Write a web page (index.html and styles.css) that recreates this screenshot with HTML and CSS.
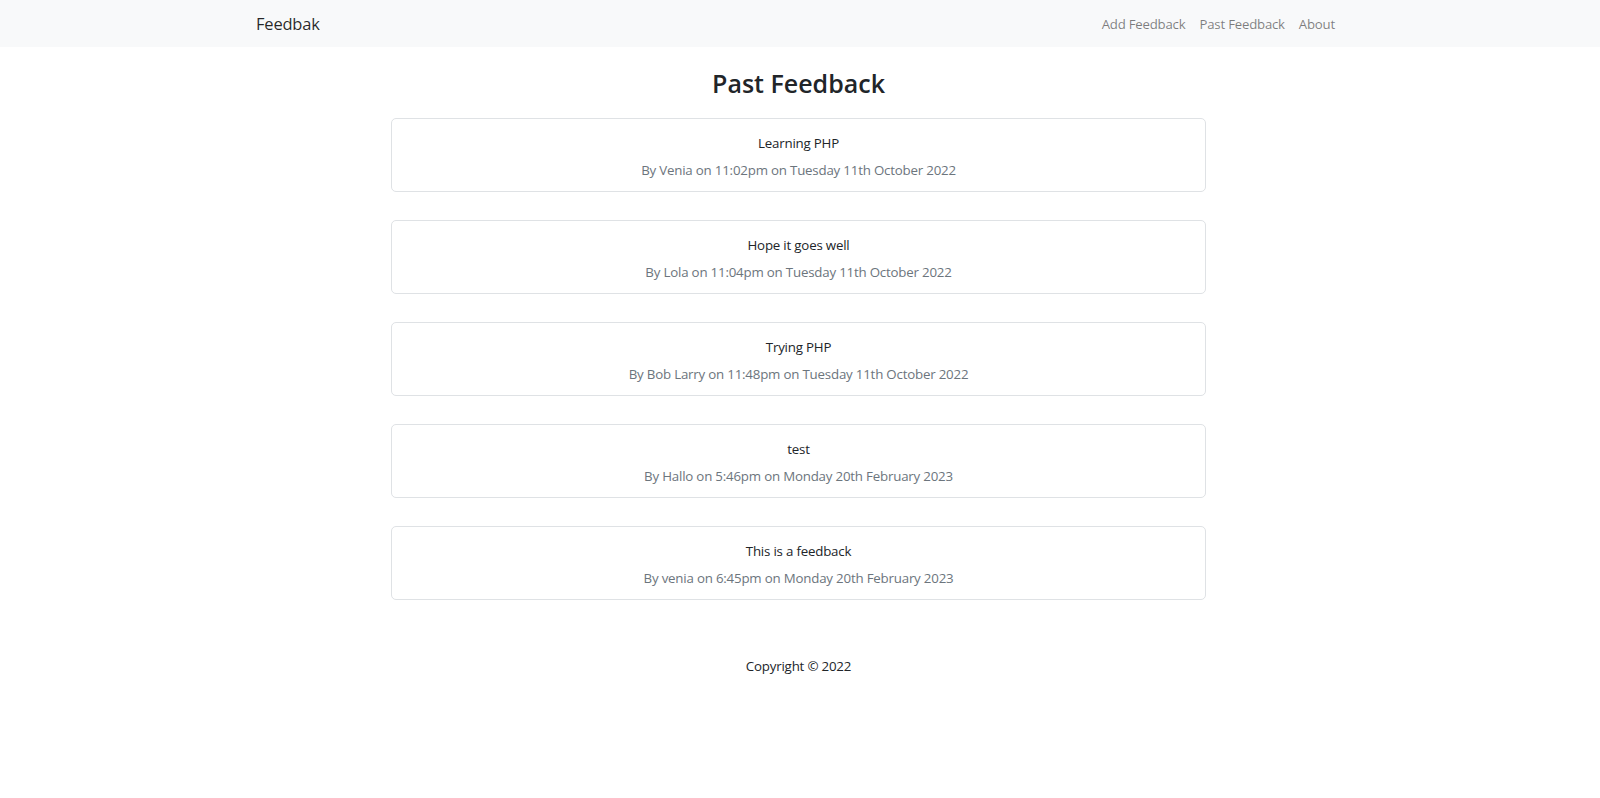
FILE: index.html
```html
<!DOCTYPE html>
<html lang="en">
<head>
<meta charset="utf-8">
<title>Past Feedback</title>
<link rel="stylesheet" href="styles.css">
</head>
<body>
<nav class="navbar">
  <a class="brand" href="#">Feedbak</a>
  <ul class="nav-links">
    <li><a href="#">Add Feedback</a></li>
    <li><a href="#">Past Feedback</a></li>
    <li><a href="#">About</a></li>
  </ul>
</nav>
<main class="main">
  <h2 class="page-title">Past Feedback</h2>
  <div class="list">
    <div class="card">
      <div class="card-text">Learning PHP</div>
      <div class="card-meta">By Venia on 11:02pm on Tuesday 11th October 2022</div>
    </div>
    <div class="card">
      <div class="card-text">Hope it goes well</div>
      <div class="card-meta">By Lola on 11:04pm on Tuesday 11th October 2022</div>
    </div>
    <div class="card">
      <div class="card-text">Trying PHP</div>
      <div class="card-meta">By Bob Larry on 11:48pm on Tuesday 11th October 2022</div>
    </div>
    <div class="card">
      <div class="card-text">test</div>
      <div class="card-meta">By Hallo on 5:46pm on Monday 20th February 2023</div>
    </div>
    <div class="card">
      <div class="card-text">This is a feedback</div>
      <div class="card-meta">By venia on 6:45pm on Monday 20th February 2023</div>
    </div>
  </div>
</main>
<footer class="footer">Copyright &copy; 2022</footer>
</body>
</html>
```

FILE: styles.css
```css
* { box-sizing: border-box; }
html, body { margin: 0; padding: 0; background: #fff; }
body {
  font-family: "Open Sans", "Noto Sans", sans-serif;
  font-size: 13.3px;
  letter-spacing: -0.2px;
  line-height: 22px;
  color: #212529;
}
.navbar {
  height: 47px;
  background: #f8f9fa;
  display: flex;
  align-items: center;
  justify-content: space-between;
  padding: 0 265px 0 256px;
}
.brand {
  font-size: 16.5px;
  color: rgba(0,0,0,.85);
  text-decoration: none;
  line-height: 24px;
}
.nav-links {
  list-style: none;
  margin: 0;
  padding: 0;
  display: flex;
  gap: 14px;
}
.nav-links a {
  color: rgba(0,0,0,.5);
  text-decoration: none;
  font-size: 13.2px;
}
.main {
  width: 815px;
  margin: 0 0 0 391px;
}
.page-title {
  margin: 21px 0 19px;
  font-size: 25px;
  line-height: 31px;
  font-weight: 600;
  letter-spacing: 0;
  text-align: center;
  color: #212529;
}
.list {
  display: flex;
  flex-direction: column;
  gap: 28px;
}
.card {
  height: 74px;
  border: 1px solid #dfe2e5;
  border-radius: 5px;
  padding: 13px 16px 10px;
  text-align: center;
}
.card-text { color: #212529; }
.card-meta { margin-top: 5px; color: #6c757d; }
.footer {
  text-align: center;
  margin-top: 55px;
  padding-right: 3px;
  color: #212529;
}
```
